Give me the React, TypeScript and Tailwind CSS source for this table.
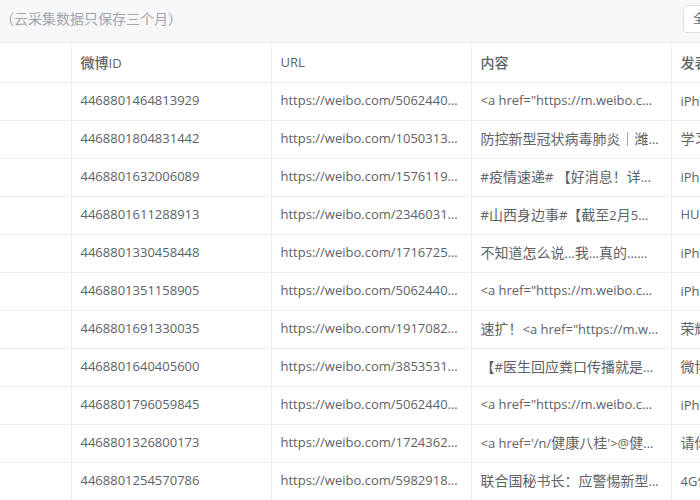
const rows = [
  ["4468801464813929", "https://weibo.com/5062440123/IsYkz8a9F", '<a href="https://m.weibo.cn/search">', "iPhone客户端"],
  ["4468801804831442", "https://weibo.com/1050313245/IsYkAb3xQ", "防控新型冠状病毒肺炎｜潍坊市最新通报", "学习强国"],
  ["4468801632006089", "https://weibo.com/1576119330/IsYkzq2Hd", "#疫情速递# 【好消息！详情请看", "iPhone客户端"],
  ["4468801611288913", "https://weibo.com/2346031210/IsYkzmP7L", "#山西身边事#【截至2月5日12时", "HUAWEI Mate 20"],
  ["4468801330458448", "https://weibo.com/1716725011/IsYkyGm2c", "不知道怎么说...我...真的...好难过", "iPhone客户端"],
  ["4468801351158905", "https://weibo.com/5062440123/IsYkyK0bR", '<a href="https://m.weibo.cn/search">', "iPhone客户端"],
  ["4468801691330035", "https://weibo.com/1917082210/IsYkzAc1y", '速扩！<a href="https://m.weibo.cn">', "荣耀Magic2"],
  ["4468801640405600", "https://weibo.com/3853531120/IsYkzrT4e", "【#医生回应粪口传播就是吃屎#】", "微博 weibo.com"],
  ["4468801796059845", "https://weibo.com/5062440123/IsYkA0nFt", '<a href="https://m.weibo.cn/search">', "iPhone客户端"],
  ["4468801326800173", "https://weibo.com/1724362112/IsYkyFq8k", "<a href='/n/健康八桂'>@健康八桂</a>", "请你嗅嗅"],
  ["4468801254570786", "https://weibo.com/5982918201/IsYkyq7Wb", "联合国秘书长：应警惕新型冠状病毒", "4G信号满格"],
];

const font = { fontFamily: '"Open Sans", "Noto Sans CJK SC", sans-serif' };

// CJK runs are drawn a size up, like YaHei next to the latin digits
function Txt({ s }: { s: string }) {
  const parts = s.split(/([\u3000-\u303f\u4e00-\u9fff\uff00-\uffef]+)/);
  return (
    <>
      {parts.map((p, i) =>
        i % 2 === 1 ? (
          <span key={i} className="text-[14px]">{p}</span>
        ) : (
          p
        )
      )}
    </>
  );
}

export default function App() {
  return (
    <div className="w-[700px] h-[500px] overflow-hidden bg-white text-[13px] text-[#606266]" style={font}>
      <div className="h-[43px] bg-[#f6f7f9] border-b border-[#ebeef5] flex items-center relative">
        <span className="text-[#a3a6ad] text-[14px] -mt-[6px]">（云采集数据只保存三个月）</span>
        <button className="absolute left-[683px] top-[5px] h-[28px] px-[9px] bg-white border border-[#dcdfe6] rounded-[4px] text-[12px] text-[#606266] whitespace-nowrap">
          全部导出
        </button>
      </div>
      <table className="table-fixed border-collapse w-[871px]">
        <colgroup>
          <col className="w-[71px]" />
          <col className="w-[200px]" />
          <col className="w-[200px]" />
          <col className="w-[200px]" />
          <col className="w-[200px]" />
        </colgroup>
        <thead>
          <tr className="h-[39px]">
            <th className="border-b border-r border-[#ebeef5]"></th>
            {["微博ID", "URL", "内容", "发表设备"].map((h) => (
              <th key={h} className="border-b border-r border-[#ebeef5] pl-[9px] pr-[11px] text-left font-medium text-[#606266]">
                <Txt s={h} />
              </th>
            ))}
          </tr>
        </thead>
        <tbody>
          {rows.map((r) => (
            <tr key={r[0]} className="h-[38px]">
              <td className="border-b border-r border-[#ebeef5]"></td>
              {r.map((c, i) => (
                <td key={i} className="border-b border-r border-[#ebeef5] pl-[9px] pr-[11px] whitespace-nowrap overflow-hidden text-ellipsis">
                  <Txt s={c} />
                </td>
              ))}
            </tr>
          ))}
        </tbody>
      </table>
    </div>
  );
}
